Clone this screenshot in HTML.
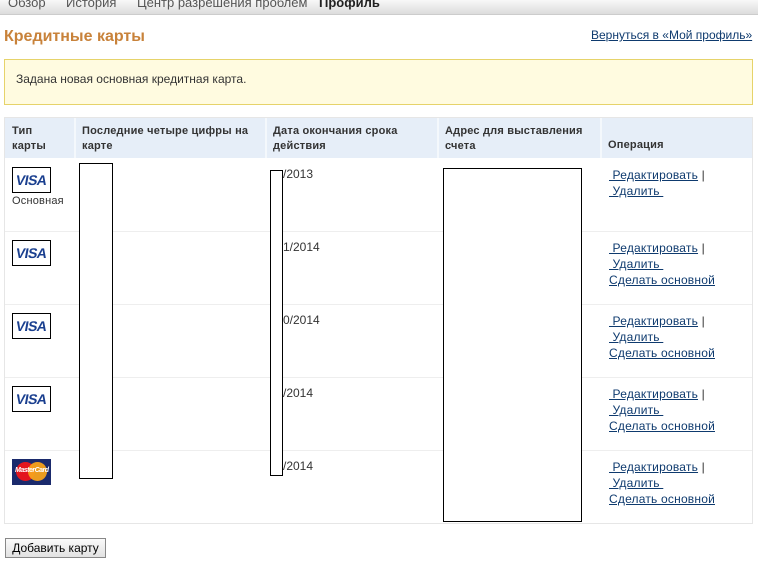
<!DOCTYPE html>
<html><head><meta charset="utf-8"><style>
*{margin:0;padding:0;box-sizing:border-box}
body{width:768px;height:561px;background:#fff;font-family:"Liberation Sans","Noto Sans CJK SC",sans-serif;font-size:12px;color:#333;position:relative;overflow:hidden}
.a{position:absolute;white-space:nowrap}
.nav{left:0;top:0;width:758px;height:15px;background:linear-gradient(#f8f8f8,#dcdcdc);border-bottom:1px solid #ccc}
.nav span{position:absolute;top:-5px;font-size:13px;color:#555}
a{color:#0e3a6e;text-decoration:underline}
.th{font-weight:bold;font-size:11px;color:#333;line-height:15px;letter-spacing:0.2px}
.visa{width:39px;height:26px;border:1px solid #000;background:#fff;font:bold 14px "Liberation Sans",sans-serif;color:#1a3f8f;text-align:center;line-height:24px;letter-spacing:-0.5px}
.visa span{display:inline-block;transform:skewX(-10deg)}
.red{border:1px solid #000;background:#fff}
.ops{font-size:12px;line-height:16px;white-space:nowrap;letter-spacing:0.2px}
</style></head><body>
<div class="a nav"><span style="left:8px">Обзор</span><span style="left:66px">История</span><span style="left:137px">Центр разрешения проблем</span><span style="left:319px;font-weight:bold;color:#222">Профиль</span></div>
<div class="a" style="left:4px;top:28px;font-size:16px;font-weight:bold;color:#c8823a">Кредитные карты</div>
<div class="a" style="left:591px;top:28px;font-size:12px"><a>Вернуться в «Мой профиль»</a></div>
<div class="a" style="left:4px;top:59px;width:749px;height:46px;background:#fffbe0;border:1px solid #e6d36a"></div>
<div class="a" style="left:16px;top:72px;font-size:12px">Задана новая основная кредитная карта.</div>
<div class="a" style="left:4px;top:117px;width:749px;height:407px;border:1px solid #e6e6e6"></div>
<div class="a" style="left:5px;top:118px;width:747px;height:40px;background:#e6eef8"></div>
<div class="a" style="left:74px;top:118px;width:2px;height:40px;background:#f4f8fc"></div>
<div class="a" style="left:265px;top:118px;width:2px;height:40px;background:#f4f8fc"></div>
<div class="a" style="left:437px;top:118px;width:2px;height:40px;background:#f4f8fc"></div>
<div class="a" style="left:600px;top:118px;width:2px;height:40px;background:#f4f8fc"></div>
<div class="a th" style="left:12px;top:124px">Тип<br>карты</div>
<div class="a th" style="left:82px;top:124px">Последние четыре цифры на<br>карте</div>
<div class="a th" style="left:273px;top:124px">Дата окончания срока<br>действия</div>
<div class="a th" style="left:445px;top:124px">Адрес для выставления<br>счета</div>
<div class="a th" style="left:608px;top:138px">Операция</div>
<div class="a" style="left:5px;top:231px;width:747px;height:1px;background:#eee"></div>
<div class="a" style="left:5px;top:304px;width:747px;height:1px;background:#eee"></div>
<div class="a" style="left:5px;top:377px;width:747px;height:1px;background:#eee"></div>
<div class="a" style="left:5px;top:450px;width:747px;height:1px;background:#eee"></div>
<div class="a visa" style="left:12px;top:167px"><span>VISA</span></div>
<div class="a" style="left:12px;top:195px;font-size:11px;letter-spacing:0.2px">Основная</div>
<div class="a visa" style="left:12px;top:240px"><span>VISA</span></div>
<div class="a visa" style="left:12px;top:313px"><span>VISA</span></div>
<div class="a visa" style="left:12px;top:386px"><span>VISA</span></div>
<div class="a" style="left:12px;top:459px;width:39px;height:26px;background:#1a2a6c">
<div class="a" style="left:4px;top:3px;width:19px;height:19px;border-radius:50%;background:#e3161e"></div>
<div class="a" style="left:16px;top:3px;width:19px;height:19px;border-radius:50%;background:#f7a21b;opacity:.95"></div>
<div class="a" style="left:3px;top:8px;font:italic bold 7px sans-serif;color:#fff;letter-spacing:-0.5px">MasterCard</div></div>
<div class="a" style="left:283px;top:167px">/2013</div>
<div class="a" style="left:283px;top:240px">1/2014</div>
<div class="a" style="left:283px;top:313px">0/2014</div>
<div class="a" style="left:283px;top:386px">/2014</div>
<div class="a" style="left:283px;top:459px">/2014</div>
<div class="a red" style="left:79px;top:163px;width:34px;height:316px"></div>
<div class="a red" style="left:270px;top:170px;width:13px;height:306px"></div>
<div class="a red" style="left:443px;top:168px;width:139px;height:354px"></div>
<div class="a ops" style="left:609px;top:167px"><a>&nbsp;Редактировать</a> |<br><a>&nbsp;Удалить&nbsp;</a></div>
<div class="a ops" style="left:609px;top:240px"><a>&nbsp;Редактировать</a> |<br><a>&nbsp;Удалить&nbsp;</a><br><a>Сделать основной</a></div>
<div class="a ops" style="left:609px;top:313px"><a>&nbsp;Редактировать</a> |<br><a>&nbsp;Удалить&nbsp;</a><br><a>Сделать основной</a></div>
<div class="a ops" style="left:609px;top:386px"><a>&nbsp;Редактировать</a> |<br><a>&nbsp;Удалить&nbsp;</a><br><a>Сделать основной</a></div>
<div class="a ops" style="left:609px;top:459px"><a>&nbsp;Редактировать</a> |<br><a>&nbsp;Удалить&nbsp;</a><br><a>Сделать основной</a></div>
<div class="a" style="left:5px;top:538px;width:101px;height:20px;border:1px solid #888;background:linear-gradient(#fafafa,#e2e2e2);font-size:12px;text-align:center;line-height:18px;color:#000">Добавить карту</div>
</body></html>
